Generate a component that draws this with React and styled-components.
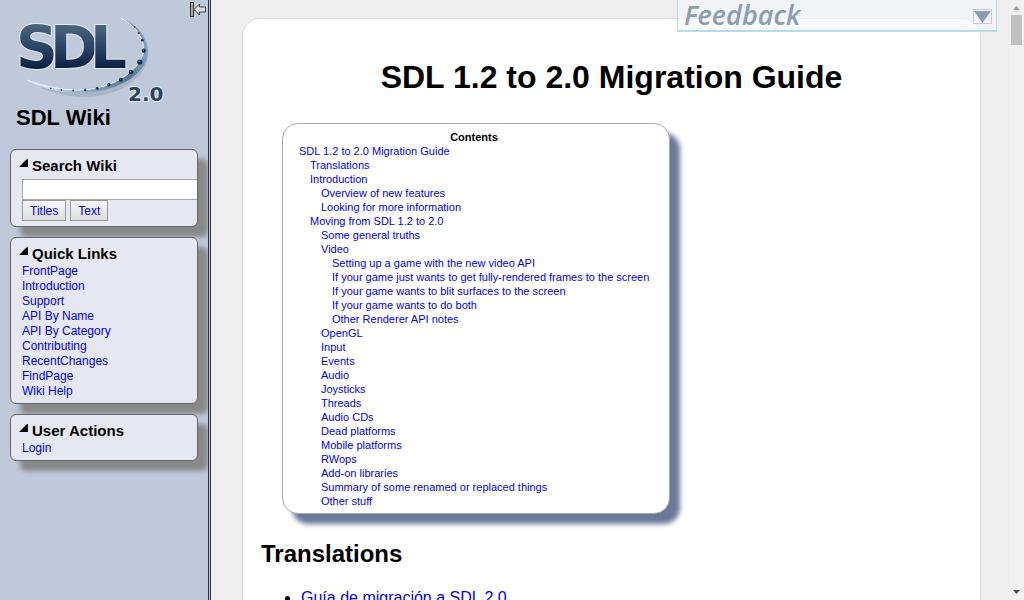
import React from 'react';
import styled, { createGlobalStyle } from 'styled-components';

const GlobalStyle = createGlobalStyle`
  html, body { margin: 0; background: #eee; }
  body {
    font-family: "Liberation Sans", Arial, Helvetica, sans-serif;
    font-size: 16px;
    color: #000;
    height: 100vh;
    overflow: hidden;
  }
  a { color: #00f; text-decoration: none; }
`;

const Layout = styled.div`
  display: flex;
  height: 100vh;
`;

const Sidebar = styled.aside`
  position: relative;
  flex: none;
  box-sizing: border-box;
  width: 211px;
  padding: 0 10px;
  overflow: hidden;
  background: #bfc9da;
  border-right: 3px double #333;
`;

const CollapseButton = styled.button`
  position: absolute;
  top: 1px;
  right: 1px;
  width: 18px;
  height: 17px;
  padding: 0;
  border: 0;
  background: none;
  svg { display: block; }
`;

const LogoLink = styled.a`
  display: block;
  height: 106px;
  margin: 0 0 0 -10px;
  svg { display: block; }
`;

const SiteName = styled.div`
  margin: 0 0 19px 6px;
  font-size: 22px;
  font-weight: bold;
  line-height: 24px;
`;

const Panel = styled.section`
  box-sizing: border-box;
  width: 188px;
  margin-bottom: 10px;
  border: 1px solid #666;
  border-radius: 6px;
  background: #e5e8f0;
  box-shadow: 10px 10px 5px #888;
`;

const PanelBody = styled.div`
  padding: 7px 0 4px 11px;
  overflow: hidden;
`;

const PanelTitle = styled.h2`
  display: flex;
  gap: 4px;
  margin: 0 0 1px -3px;
  font-size: 15px;
  line-height: 18px;
  svg { flex: none; margin-top: 2px; }
`;

const LinkList = styled.ul`
  margin: 0;
  padding: 0;
  list-style: none;
  font-size: 12px;
  line-height: 15px;
`;

const SearchForm = styled.form`
  padding: 3px 0 1px;
`;

const SearchInput = styled.input`
  display: block;
  box-sizing: border-box;
  width: 190px;
  height: 21px;
  padding: 1px;
  border: 1px solid #a9a9a9;
  background: #fff;
  font: 12px "Liberation Sans", sans-serif;
`;

const SearchButtons = styled.div`
  display: flex;
  gap: 4px;
`;

const SearchButton = styled.button`
  height: 21px;
  padding: 0 7px;
  border: 1px solid #999;
  background: linear-gradient(#f6f6f6, #dedede);
  color: #00f;
  font: 12px "Liberation Sans", sans-serif;
`;

const Main = styled.main`
  flex: 1;
  min-width: 0;
  padding: 18px 28px 0 31px;
  overflow: hidden;
`;

const Page = styled.article`
  box-sizing: border-box;
  min-height: 640px;
  padding: 40px 18px;
  background: #fff;
  border: 1px solid #ddd;
  border-radius: 18px;
`;

const PageTitle = styled.h1`
  margin: 0;
  text-align: center;
  font-size: 32px;
  line-height: 37px;
`;

const Contents = styled.nav`
  box-sizing: border-box;
  width: 388px;
  margin: 27px 0 26px 21px;
  padding: 6px 16px 5px;
  border: 1px solid #aaa;
  border-radius: 16px;
  background: #fff;
  box-shadow: 10px 10px 5px #6a789a;
  font-size: 11px;
  line-height: 14px;
`;

const ContentsTitle = styled.p`
  margin: 0;
  text-align: center;
  font-weight: bold;
  padding-right: 4px;
`;

const ContentsList = styled.ul`
  margin: 0;
  padding: 0;
  list-style: none;
  white-space: nowrap;
`;

const ContentsItem = styled.li`
  padding-left: ${(p) => p.$level * 11}px;
`;

const SectionTitle = styled.h2`
  margin: 0;
  font-size: 24px;
  line-height: 28px;
`;

const TranslationList = styled.ul`
  margin: 20px 0 0;
  padding-left: 40px;
  line-height: 20px;
`;

const Feedback = styled.div`
  position: absolute;
  top: 0;
  right: 27px;
  box-sizing: border-box;
  width: 320px;
  height: 32px;
  padding: 0 4px 0 6px;
  display: flex;
  align-items: center;
  justify-content: space-between;
  background: rgba(243, 247, 252, 0.6);
  border: solid #b4dcec;
  border-width: 0 1px 2px;
`;

const FeedbackTitle = styled.span`
  font: italic 600 27px/30px "Open Sans", sans-serif;
  color: #8d9cb1;
`;

const FeedbackToggle = styled.button`
  width: 19px;
  height: 15px;
  margin-top: 3px;
  padding: 0;
  border: 1px solid #ccc;
  background: #f1f3f5;
  svg { display: block; }
`;

const ScrollTrack = styled.div`
  flex: none;
  width: 15px;
  display: flex;
  flex-direction: column;
  align-items: center;
  background: #f1f1f1;
  svg { flex: none; }
`;

const ScrollThumb = styled.div`
  width: 11px;
  height: 30px;
  margin-bottom: auto;
  background: #c1c1c1;
`;

const beads = [
  [134.7, 26.7, 0.7], [138.7, 33, 1], [142.3, 40.2, 1.4], [143.8, 50.7, 2.1],
  [139.8, 62, 2.6], [131, 72, 2.2], [120.8, 79.7, 2], [109, 84.7, 1.7],
  [97.2, 88.3, 1.4], [85.2, 90, 1.2], [73.2, 90.6, 1], [61.4, 90, 0.9], [50.8, 88.3, 0.7],
];

const LogoText = styled.text`
  font-family: "DejaVu Sans", sans-serif;
  font-weight: bold;
  font-size: ${(p) => p.$size}px;
  stroke: #e3e9f2;
  stroke-width: 2px;
  stroke-linejoin: round;
  paint-order: stroke;
`;

function Logo() {
  return (
    <svg width="180" height="106" viewBox="0 0 180 106" role="img" aria-label="SDL 2.0">
      <defs>
        <linearGradient id="letters" x1="0" y1="25" x2="0" y2="69" gradientUnits="userSpaceOnUse">
          <stop offset="0" stopColor="#4a667e" />
          <stop offset="0.5" stopColor="#2a4565" />
          <stop offset="1" stopColor="#0a1e42" />
        </linearGradient>
        <linearGradient id="swoosh" x1="27" y1="80" x2="148" y2="50" gradientUnits="userSpaceOnUse">
          <stop offset="0" stopColor="#e8f0f8" />
          <stop offset="0.35" stopColor="#9dbbd3" />
          <stop offset="0.8" stopColor="#56748f" />
          <stop offset="1" stopColor="#86a5bf" />
        </linearGradient>
      </defs>
      <path d="M140 36C149 45 150 56 145 67C135 86 110 97 85 97C69 97 47 92 38 86C64 92 101 91 122 78C142 66 148 50 140 36Z" fill="#8d9bb1" opacity="0.45" />
      <path d="M121 18C139 25 149 39 148 54C145 77 113 93 78 93C58 93 39 87 27 80C46 87 62 90 78 90C108 90 137 74 143 54C146 40 136 26 121 18Z" fill="url(#swoosh)" />
      <path d="M121 18C136 26 146 40 143 54C137 74 108 90 78 90C62 90 46 87 27 80" fill="none" stroke="#edf3f9" strokeWidth="1" />
      {beads.map(([x, y, r]) => (
        <g key={x}>
          <circle cx={x} cy={y} r={r} fill="#142e50" />
          <circle cx={x - r * 0.3} cy={y - r * 0.3} r={r * 0.3} fill="#93a9c0" />
        </g>
      ))}
      <LogoText $size={58} x="16 50 90" y="68" fill="url(#letters)">SDL</LogoText>
      <LogoText $size={20} x="128" y="101" fill="#2d4660">2.0</LogoText>
    </svg>
  );
}

function CollapseIcon() {
  return (
    <svg width="18" height="17" viewBox="0 0 18 17" aria-hidden="true">
      <rect x="1.5" y="1.5" width="3" height="14" fill="#aaa" stroke="#333" />
      <path d="M5 8.5L10.5 3V6H16.5V11H10.5V14Z" fill="#ddd" stroke="#444" />
    </svg>
  );
}

function SidePanel({ title, children }) {
  return (
    <Panel>
      <PanelBody>
        <PanelTitle>
          <svg width="9" height="8" viewBox="0 0 9 8" aria-hidden="true"><path d="M0 8H9V0H8Z" /></svg>
          {title}
        </PanelTitle>
        {children}
      </PanelBody>
    </Panel>
  );
}

const quickLinks = ['FrontPage', 'Introduction', 'Support', 'API By Name', 'API By Category', 'Contributing', 'RecentChanges', 'FindPage', 'Wiki Help'];

const contents = [
  [0, 'SDL 1.2 to 2.0 Migration Guide'],
  [1, 'Translations'],
  [1, 'Introduction'],
  [2, 'Overview of new features'],
  [2, 'Looking for more information'],
  [1, 'Moving from SDL 1.2 to 2.0'],
  [2, 'Some general truths'],
  [2, 'Video'],
  [3, 'Setting up a game with the new video API'],
  [3, 'If your game just wants to get fully-rendered frames to the screen'],
  [3, 'If your game wants to blit surfaces to the screen'],
  [3, 'If your game wants to do both'],
  [3, 'Other Renderer API notes'],
  [2, 'OpenGL'],
  [2, 'Input'],
  [2, 'Events'],
  [2, 'Audio'],
  [2, 'Joysticks'],
  [2, 'Threads'],
  [2, 'Audio CDs'],
  [2, 'Dead platforms'],
  [2, 'Mobile platforms'],
  [2, 'RWops'],
  [2, 'Add-on libraries'],
  [2, 'Summary of some renamed or replaced things'],
  [2, 'Other stuff'],
];

export default function App() {
  return (
    <>
      <GlobalStyle />
      <Layout>
        <Sidebar>
          <LogoLink href="#"><Logo /></LogoLink>
          <CollapseButton type="button" aria-label="Collapse sidebar"><CollapseIcon /></CollapseButton>
          <SiteName>SDL Wiki</SiteName>
          <SidePanel title="Search Wiki">
            <SearchForm onSubmit={(e) => e.preventDefault()}>
              <SearchInput type="text" aria-label="Search Wiki" />
              <SearchButtons>
                <SearchButton type="submit">Titles</SearchButton>
                <SearchButton type="submit">Text</SearchButton>
              </SearchButtons>
            </SearchForm>
          </SidePanel>
          <SidePanel title="Quick Links">
            <LinkList>
              {quickLinks.map((name) => <li key={name}><a href="#">{name}</a></li>)}
            </LinkList>
          </SidePanel>
          <SidePanel title="User Actions">
            <LinkList><li><a href="#">Login</a></li></LinkList>
          </SidePanel>
        </Sidebar>
        <Main>
          <Page>
            <PageTitle>SDL 1.2 to 2.0 Migration Guide</PageTitle>
            <Contents aria-label="Contents">
              <ContentsTitle>Contents</ContentsTitle>
              <ContentsList>
                {contents.map(([level, text]) => (
                  <ContentsItem key={text} $level={level}><a href="#">{text}</a></ContentsItem>
                ))}
              </ContentsList>
            </Contents>
            <SectionTitle>Translations</SectionTitle>
            <TranslationList>
              <li><a href="#">Guía de migración a SDL 2.0</a></li>
            </TranslationList>
          </Page>
        </Main>
        <ScrollTrack aria-hidden="true">
          <svg width="15" height="15" viewBox="0 0 15 15"><path d="M4 10H11L7.5 6Z" fill="#a3a3a3" /></svg>
          <ScrollThumb />
          <svg width="15" height="15" viewBox="0 0 15 15"><path d="M4 5H11L7.5 9Z" fill="#505050" /></svg>
        </ScrollTrack>
      </Layout>
      <Feedback>
        <FeedbackTitle>Feedback</FeedbackTitle>
        <FeedbackToggle type="button" aria-label="Show feedback form">
          <svg width="17" height="13" viewBox="0 0 17 13"><path d="M0 1H17L8.500 13Z" fill="#8b9bb0" /></svg>
        </FeedbackToggle>
      </Feedback>
    </>
  );
}
